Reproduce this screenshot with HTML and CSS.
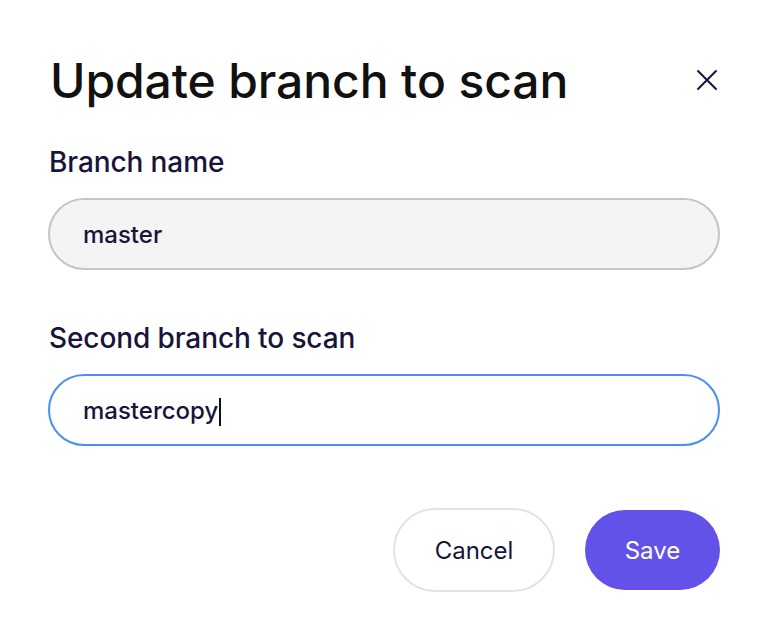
FILE: index.html
```html
<!DOCTYPE html>
<html lang="en">
<head>
    <meta charset="UTF-8">
    <meta name="viewport" content="width=device-width, initial-scale=1.0">
    <title>Update branch to scan</title>
    <link rel="stylesheet" href="styles.css">
</head>
<body>
    <div class="modal">
        <div class="modal-header">
            <h1>Update branch to scan</h1>
            <button class="close-btn" aria-label="Close">
                <svg width="22" height="22" viewBox="0 0 22 22">
                    <path d="M2 2 L20 20 M20 2 L2 20" stroke="#15123a" stroke-width="2" stroke-linecap="round"/>
                </svg>
            </button>
        </div>
        <div class="field">
            <label>Branch name</label>
            <div class="input disabled">master</div>
        </div>
        <div class="field">
            <label>Second branch to scan</label>
            <div class="input focused">mastercopy<span class="caret"></span></div>
        </div>
        <div class="actions">
            <button class="btn btn-cancel">Cancel</button>
            <button class="btn btn-save">Save</button>
        </div>
    </div>
</body>
</html>
```

FILE: styles.css
```css
body {
    font-family: 'Inter', 'Liberation Sans', sans-serif;
    margin: 0;
    background: #ffffff;
}
.modal {
    width: 672px;
    padding: 48px 48px 0 48px;
}
.modal-header {
    display: flex;
    align-items: center;
    justify-content: space-between;
    height: 64px;
}
.modal-header h1 {
    margin: 0 0 0 2px;
    font-size: 48px;
    font-weight: 500;
    color: #111111;
    letter-spacing: -0.1px;
}
.close-btn {
    background: none;
    border: none;
    padding: 0;
    margin-right: 2px;
    width: 22px;
    height: 22px;
    display: flex;
}
.field {
    margin-top: 32px;
}
.field + .field {
    margin-top: 50px;
}
.field label {
    display: block;
    font-size: 28px;
    font-weight: 500;
    color: #18153a;
    margin-left: 1px;
    line-height: 36px;
    letter-spacing: -0.1px;
}
.input {
    margin-top: 18px;
    height: 68px;
    border-radius: 36px;
    border: 2px solid #c5c5ca;
    padding: 0 33px;
    display: flex;
    align-items: center;
    font-size: 24px;
    font-weight: 500;
    color: #18153a;
}
.input.disabled {
    background: #f4f4f5;
}
.input.focused {
    background: #ffffff;
    border-color: #4a8ff0;
}
.caret {
    display: inline-block;
    width: 2px;
    height: 28px;
    background: #111111;
    margin-left: 1px;
    margin-top: 4px;
}
.actions {
    display: flex;
    justify-content: flex-end;
    gap: 30px;
    margin-top: 62px;
    align-items: center;
}
.btn {
    font-family: 'Inter', 'Liberation Sans', sans-serif;
    font-size: 24px;
    border-radius: 42px;
    cursor: pointer;
}
.btn-cancel {
    width: 162px;
    height: 84px;
    background: #ffffff;
    border: 2px solid #e3e3e7;
    color: #18153a;
}
.btn-save {
    width: 135px;
    height: 80px;
    background: #6352e8;
    border: none;
    color: #ffffff;
}
```
